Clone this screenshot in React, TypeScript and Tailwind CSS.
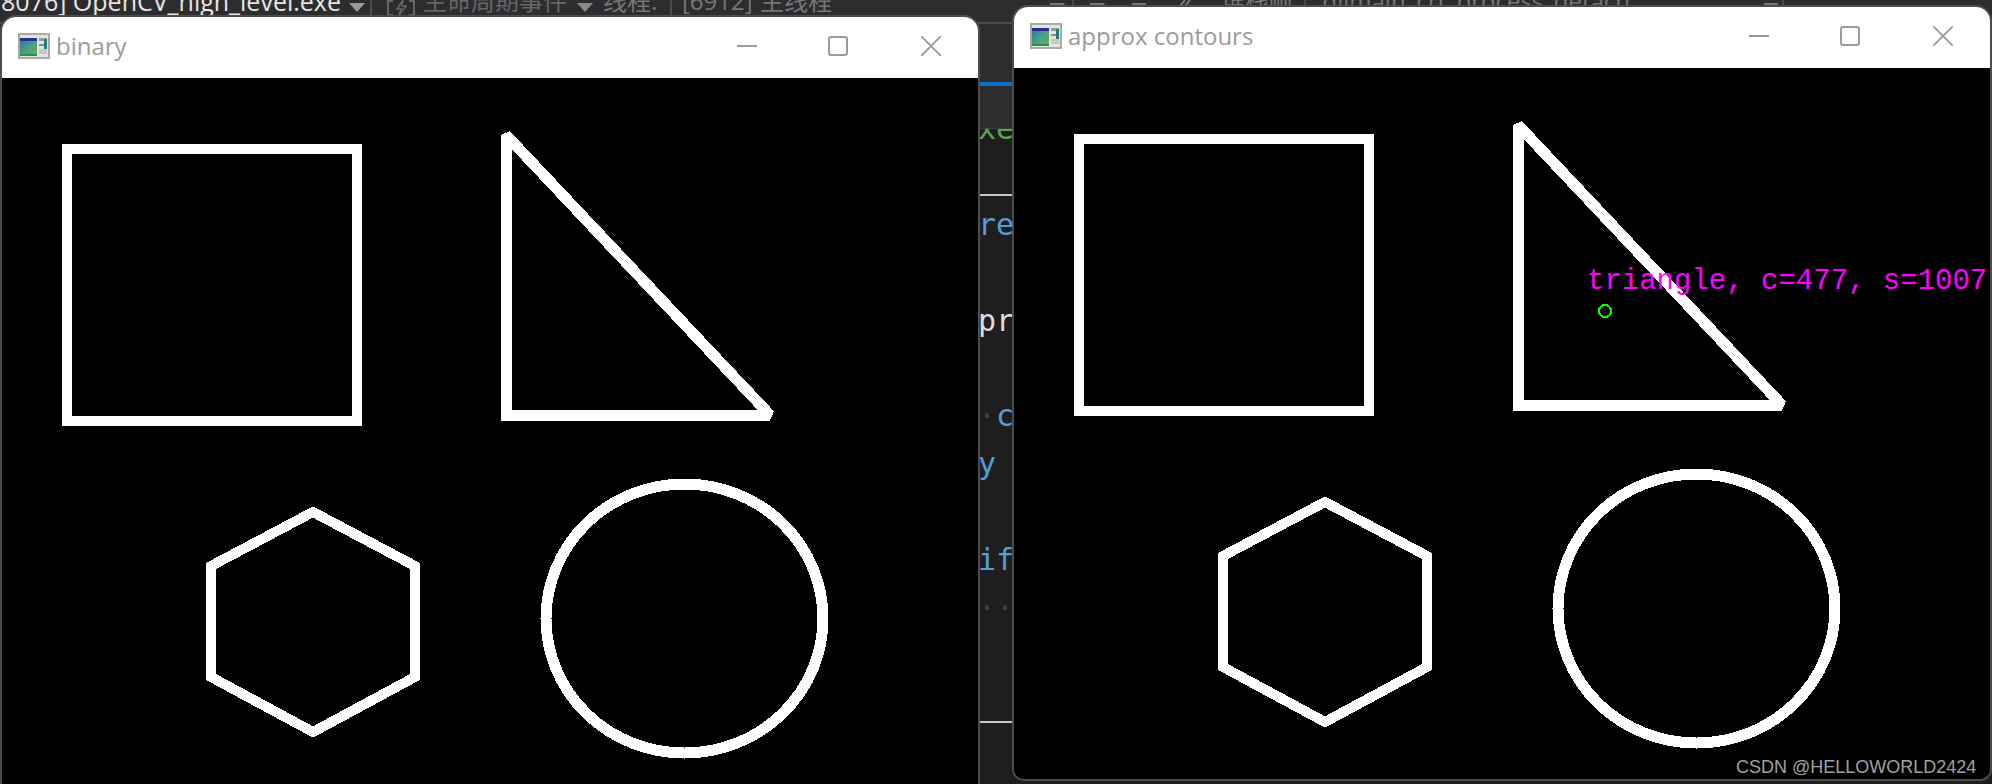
import type { ReactNode } from "react";

const sans = "font-['Open_Sans','Noto_Sans_CJK_SC',sans-serif]";

function AppIcon({ id }: { id: string }) {
  return (
    <svg width="32" height="26" viewBox="0 0 32 26" className="shrink-0">
      <defs>
        <linearGradient id={id} x1="0" y1="0" x2="1" y2="1">
          <stop offset="0" stopColor="#2f6f9f" />
          <stop offset="0.55" stopColor="#4fa08a" />
          <stop offset="1" stopColor="#5fb04f" />
        </linearGradient>
      </defs>
      <rect width="32" height="26" fill="#a9a9a9" />
      <rect x="2" y="2" width="28" height="22" fill="#e4e4e4" />
      <rect x="2" y="5" width="17" height="18" fill={`url(#${id})`} />
      <rect x="2" y="5" width="17" height="3" fill="#27308f" />
      <rect x="2" y="21" width="17" height="2" fill="#1f9a3a" />
      <rect x="21" y="5" width="8" height="3" fill="#9a9a9a" />
      <rect x="26" y="6" width="3" height="10" fill="#1f7f80" />
      <rect x="21" y="11" width="5" height="2" fill="#8a8a8a" />
      <rect x="21" y="16" width="8" height="5" fill="#c8c8c8" />
    </svg>
  );
}

function WindowButtons() {
  return (
    <div className="flex items-center">
      <svg width="20" height="20" viewBox="0 0 20 20" className="mr-[71px]">
        <path d="M0 10h20" stroke="#9a9a9a" strokeWidth="2" fill="none" />
      </svg>
      <svg width="20" height="20" viewBox="0 0 20 20" className="mr-[73px]">
        <rect x="1" y="1" width="18" height="18" rx="2" stroke="#9a9a9a" strokeWidth="2" fill="none" />
      </svg>
      <svg width="20" height="20" viewBox="0 0 20 20">
        <path d="M0 0L20 20M20 0L0 20" stroke="#9a9a9a" strokeWidth="1.8" fill="none" />
      </svg>
    </div>
  );
}

function Shapes({ children }: { children?: ReactNode }) {
  return (
    <svg width="976" height="716" viewBox="0 0 976 716" className="block">
      <g fill="none" stroke="#fff" strokeWidth="10" shapeRendering="crispEdges">
        <rect x="65" y="71" width="290" height="272" />
        <path d="M504 57V337H768Z" strokeWidth="11" strokeLinejoin="miter" strokeMiterlimit="2" />
        <path d="M311 434L413 488V599L311 654L209 599V488Z" strokeLinejoin="miter" />
        <ellipse cx="682.5" cy="540.5" rx="138.5" ry="134.5" strokeWidth="11" />
      </g>
      {children}
    </svg>
  );
}

function Win({ title, id, className, children, overlay }: { title: string; id: string; className: string; children?: ReactNode; overlay?: ReactNode }) {
  return (
    <div className={`absolute flex w-[976px] flex-col overflow-hidden rounded-t-[14px] bg-black shadow-[0_0_0_2px_#4d4d4d] ${className}`}>
      <div className={`flex h-[61px] shrink-0 items-center bg-white pr-[37px] pb-[3px] pl-[16px] ${sans}`}>
        <AppIcon id={id} />
        <span className="ml-[6px] text-[24px] leading-none text-[#9b9b9b]">{title}</span>
        <div className="ml-auto">
          <WindowButtons />
        </div>
      </div>
      <div className="relative flex-1 bg-black">
        <Shapes>{children}</Shapes>
        {overlay}
      </div>
    </div>
  );
}

function Row({ children, className = "" }: { children?: ReactNode; className?: string }) {
  return <div className={`flex h-[47.9px] items-center whitespace-pre pl-[978px] ${className}`}>{children}</div>;
}

function Rule({ pb }: { pb: string }) {
  return (
    <Row className={`!items-end ${pb}`}>
      <div className="h-[2px] w-[36px] bg-[#c8c8c8]" />
    </Row>
  );
}

function Arrow({ color }: { color: string }) {
  return (
    <svg width="16" height="9" viewBox="0 0 16 9" className="mt-[3px] shrink-0">
      <path d="M0 0H16L8 9Z" fill={color} />
    </svg>
  );
}

function Bar() {
  return <div className="h-[17px] w-[2px] shrink-0 bg-[#4a4a4a]" />;
}

export default function App() {
  return (
    <div className="relative h-[784px] w-[1992px] overflow-hidden bg-[#1e1e1e]">
      <div className="flex h-full flex-col">
        {/* Toolbar */}
        <div className={`flex h-[24px] shrink-0 items-start overflow-hidden border-b-2 border-[#4a4a4a] bg-[#2d2d30] text-[24px] leading-[24px] whitespace-pre ${sans}`}>
          <div className="flex w-[1049px] shrink-0 items-start">
            <span className="-mt-[11px] w-[349px] pl-[1px] text-[25px] text-[#e6e6e6]">8076] OpenCV_high_level.exe</span>
            <Arrow color="#9a9a9a" />
            <div className="ml-[5px]"><Bar /></div>
            <svg width="30" height="16" viewBox="0 0 30 16" className="mt-[0px] ml-[14px] shrink-0">
              <path d="M7 1H2V15H7M23 1H28V15H23" fill="none" stroke="#666" strokeWidth="2" />
              <path d="M17 0L11 9H15L13 15L20 6H16Z" fill="none" stroke="#666" strokeWidth="1.5" />
            </svg>
            <span className="-mt-[11px] ml-[7px] w-[154px] text-[#666]">生命周期事件</span>
            <Arrow color="#8a8a8a" />
            <span className="-mt-[11px] ml-[10px] w-[67px] text-[#777]">线程:</span>
            <div className="mr-[10px]"><Bar /></div>
            <span className="-mt-[11px] w-[78px] text-[#777]">[6912]</span>
            <span className="-mt-[11px] text-[#777]">主线程</span>
          </div>
          <Arrow color="#777" />
          <div className="ml-[7px]"><Bar /></div>
          <div className="ml-[15px]"><Arrow color="#777" /></div>
          <div className="ml-[26px]"><Arrow color="#777" /></div>
          <svg width="20" height="12" viewBox="0 0 20 12" className="ml-[24px] shrink-0">
            <path d="M14 0L4 12M19 0L9 12" fill="none" stroke="#777" strokeWidth="2" />
          </svg>
          <span className="-mt-[11px] ml-[30px] w-[83px] text-[#777]">堆栈帧:</span>
          <Bar />
          <span className="-mt-[11px] ml-[6px] w-[451px] text-[#777]">_dllmain_crt_process_detach</span>
          <Arrow color="#777" />
          <div className="ml-[3px]"><Bar /></div>
        </div>
        {/* Tab band */}
        <div className="flex h-[104px] shrink-0 flex-col bg-[#2d2d30]">
          <div className="h-[58px] shrink-0" />
          <div className="ml-[978px] h-[4px] w-[36px] bg-[#0e70c0]" />
        </div>
        {/* Code */}
        <div className="flex-1 overflow-hidden border-t border-[#3f3f46] font-['DejaVu_Sans_Mono',monospace] text-[30px] leading-none">
          <div className="-mt-[24px]">
            <Row className="text-[#57a64a]">xe</Row>
            <Rule pb="pb-[5px]" />
            <Row className="text-[#569cd6]">re</Row>
            <Row />
            <Row className="text-[#dcdcdc]">pr</Row>
            <Row />
            <Row className="text-[#569cd6]"><span className="text-[#1f4f5f]">·</span>c</Row>
            <Row className="text-[#569cd6]">y</Row>
            <Row />
            <Row className="text-[#569cd6]">if</Row>
            <Row className="text-[#1f4f5f]">··</Row>
            <Row />
            <Rule pb="pb-[5px]" />
          </div>
        </div>
      </div>

      {/* Windows */}
      <Win title="binary" id="ic1" className="top-[17px] left-[2px] h-[800px]" />
      <Win
        title="approx contours"
        id="ic2"
        className="top-[7px] left-[1014px] h-[772px] rounded-b-[10px]"
        overlay={
          <span className="absolute top-[197px] left-[573px] font-['Liberation_Mono',monospace] text-[29px] leading-[34px] whitespace-pre text-[#ff00ff]">
            triangle, c=477, s=1007
          </span>
        }
      >
        <circle cx="591" cy="243" r="6" fill="none" stroke="#00ff00" strokeWidth="2" shapeRendering="crispEdges" />
      </Win>

      <span className="absolute top-[756px] left-[1736px] font-['Liberation_Sans',sans-serif] text-[18px] leading-[22px] whitespace-pre text-[#a0a0a0]">
        CSDN @HELLOWORLD2424
      </span>
    </div>
  );
}
